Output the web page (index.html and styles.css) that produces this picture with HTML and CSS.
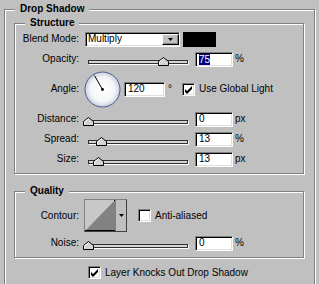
FILE: index.html
```html
<!DOCTYPE html>
<html>
<head>
<meta charset="utf-8">
<title>Drop Shadow</title>
<link rel="stylesheet" href="styles.css">
</head>
<body>
<div class="group outer">
  <div class="legend">Drop Shadow</div>

  <div class="group inner structure">
    <div class="legend">Structure</div>

    <div class="row">
      <div class="label">Blend Mode:</div>
      <div class="select">
        <span class="select-text">Multiply</span>
        <span class="drop-btn"><svg width="5" height="3" viewBox="0 0 5 3"><polygon points="0,0 5,0 2.5,3" fill="#000"/></svg></span>
      </div>
      <div class="swatch"></div>
    </div>

    <div class="row">
      <div class="label">Opacity:</div>
      <div class="slider">
        <div class="track"></div>
        <svg class="thumb" style="left:70px" width="11" height="9" viewBox="0 0 11 9"><polygon points="5.5,0.5 10.5,4.5 10.5,8.5 0.5,8.5 0.5,4.5" fill="#d4d4d4" stroke="#000"/><polyline points="1.5,7.5 1.5,5 5.5,1.8" fill="none" stroke="#fff"/></svg>
      </div>
      <div class="field"><span class="sel">75</span></div>
      <span class="unit">%</span>
    </div>

    <div class="row tall">
      <div class="label">Angle:</div>
      <svg class="dial" width="37" height="37" viewBox="0 0 37 37">
        <defs>
          <radialGradient id="dialg" cx="50%" cy="50%" r="50%">
            <stop offset="0" stop-color="#ffffff"/>
            <stop offset="0.7" stop-color="#f4f5f8"/>
            <stop offset="1" stop-color="#c9cedd"/>
          </radialGradient>
        </defs>
        <circle cx="18.5" cy="18.5" r="17.5" fill="url(#dialg)" stroke="#4d5f91"/>
        <line x1="18.5" y1="18.5" x2="10.5" y2="4.6" stroke="#000" stroke-width="1"/>
        <circle cx="18.5" cy="18.5" r="1.4" fill="#000"/>
      </svg>
      <div class="field wide">120</div>
      <span class="deg">°</span>
      <div class="check on gl"><svg width="11" height="11" viewBox="0 0 11 11"><path d="M2 5 L4 7 L9 2 L9 5 L4 10 L2 8 Z" fill="#000"/></svg></div>
      <span class="check-label">Use Global Light</span>
    </div>

    <div class="row">
      <div class="label">Distance:</div>
      <div class="slider">
        <div class="track"></div>
        <svg class="thumb" style="left:-5px" width="11" height="9" viewBox="0 0 11 9"><polygon points="5.5,0.5 10.5,4.5 10.5,8.5 0.5,8.5 0.5,4.5" fill="#d4d4d4" stroke="#000"/><polyline points="1.5,7.5 1.5,5 5.5,1.8" fill="none" stroke="#fff"/></svg>
      </div>
      <div class="field">0</div>
      <span class="unit">px</span>
    </div>

    <div class="row">
      <div class="label">Spread:</div>
      <div class="slider">
        <div class="track"></div>
        <svg class="thumb" style="left:8px" width="11" height="9" viewBox="0 0 11 9"><polygon points="5.5,0.5 10.5,4.5 10.5,8.5 0.5,8.5 0.5,4.5" fill="#d4d4d4" stroke="#000"/><polyline points="1.5,7.5 1.5,5 5.5,1.8" fill="none" stroke="#fff"/></svg>
      </div>
      <div class="field">13</div>
      <span class="unit">%</span>
    </div>

    <div class="row">
      <div class="label">Size:</div>
      <div class="slider">
        <div class="track"></div>
        <svg class="thumb" style="left:5px" width="11" height="9" viewBox="0 0 11 9"><polygon points="5.5,0.5 10.5,4.5 10.5,8.5 0.5,8.5 0.5,4.5" fill="#d4d4d4" stroke="#000"/><polyline points="1.5,7.5 1.5,5 5.5,1.8" fill="none" stroke="#fff"/></svg>
      </div>
      <div class="field">13</div>
      <span class="unit">px</span>
    </div>
  </div>

  <div class="group inner quality">
    <div class="legend">Quality</div>

    <div class="row contour-row">
      <div class="label">Contour:</div>
      <div class="contour">
        <svg class="contour-preview" width="30" height="31" viewBox="0 0 30 31">
          <rect x="0" y="0" width="30" height="31" fill="#c8c8c8"/>
          <polygon points="0,31 30,0 30,31" fill="#828282"/>
          <rect x="0" y="30" width="30" height="1" fill="#000"/>
          <rect x="29" y="0" width="1" height="1" fill="#000"/>
        </svg>
        <div class="contour-drop"><svg width="5" height="3" viewBox="0 0 5 3"><polygon points="0,0 5,0 2.5,3" fill="#000"/></svg></div>
      </div>
      <div class="check aa"></div>
      <span class="check-label">Anti-aliased</span>
    </div>

    <div class="row noise-row">
      <div class="label">Noise:</div>
      <div class="slider">
        <div class="track"></div>
        <svg class="thumb" style="left:-5px" width="11" height="9" viewBox="0 0 11 9"><polygon points="5.5,0.5 10.5,4.5 10.5,8.5 0.5,8.5 0.5,4.5" fill="#d4d4d4" stroke="#000"/><polyline points="1.5,7.5 1.5,5 5.5,1.8" fill="none" stroke="#fff"/></svg>
      </div>
      <div class="field">0</div>
      <span class="unit">%</span>
    </div>
  </div>

  <div class="knock">
    <div class="check on"><svg width="11" height="11" viewBox="0 0 11 11"><path d="M2 5 L4 7 L9 2 L9 5 L4 10 L2 8 Z" fill="#000"/></svg></div>
    <span class="check-label">Layer Knocks Out Drop Shadow</span>
  </div>
</div>
</body>
</html>
```

FILE: styles.css
```css
html, body {
  margin: 0;
  padding: 0;
  overflow: hidden;
}

body {
  width: 319px;
  height: 284px;
  background: #c0c0c0;
  color: #000;
  font-family: "Liberation Sans", Arial, sans-serif;
  font-size: 10px;
  line-height: 12px;
}

.group {
  box-sizing: border-box;
  border: 1px solid #808080;
  box-shadow: inset 1px 1px #fff, 1px 1px #fff;
}

.outer {
  margin: 9px 0 0 4px;
  width: 311px;
  padding-bottom: 24px;
}

.legend {
  width: fit-content;
  margin: -7px 0 0 10px;
  padding: 0 5px;
  height: 12px;
  background: #c0c0c0;
  font-weight: bold;
}

.inner {
  margin-left: 9px;
  width: 290px;
}

.structure {
  margin-top: 8px;
  padding-bottom: 4px;
}

.quality {
  margin-top: 17px;
  padding-bottom: 4px;
}

.row {
  display: flex;
  align-items: center;
  height: 20px;
}

.row.tall {
  height: 40px;
}

.contour-row {
  height: 33px;
  margin-top: 2px;
}

.noise-row {
  margin-top: 1px;
}

.label {
  flex: none;
  width: 64px;
  text-align: right;
}

/* sunken controls */
.select,
.field,
.check {
  box-sizing: border-box;
  border: 1px solid;
  border-color: #808080 #fff #fff #808080;
  box-shadow: inset 1px 1px #000, inset -1px -1px #dfdfdf;
  background: #fff;
  flex: none;
}

.select {
  display: flex;
  align-items: center;
  margin-left: 6px;
  width: 95px;
  height: 15px;
  padding-left: 2px;
}

.select-text {
  flex: 1;
}

.drop-btn {
  box-sizing: border-box;
  display: flex;
  align-items: center;
  justify-content: center;
  width: 17px;
  height: 11px;
  border: 1px solid;
  border-color: #fff #000 #000 #fff;
  box-shadow: inset -1px -1px #808080;
  background: #c0c0c0;
}

.drop-btn svg,
.contour-drop svg {
  display: block;
}

.swatch {
  flex: none;
  margin: 1px 0 0 3px;
  width: 33px;
  height: 15px;
  background: #000;
}

.slider {
  position: relative;
  flex: none;
  margin: 4px 0 0 9px;
  width: 100px;
  height: 9px;
}

.track {
  box-sizing: border-box;
  margin-top: 3px;
  height: 4px;
  border: 1px solid #303030;
  background: #d4d4d4;
  box-shadow: 1px 1px #fff;
}

.thumb {
  position: absolute;
  top: 0;
  display: block;
}

.field {
  margin-left: 7px;
  width: 38px;
  height: 15px;
  padding-left: 3px;
  line-height: 12px;
  display: flex;
  align-items: center;
}

.field.wide {
  margin-left: 3px;
  width: 41px;
}

.sel {
  background: #000080;
  color: #fff;
  line-height: 11px;
}

.unit {
  margin-left: 2px;
}

.deg {
  margin-left: 3px;
}

.dial {
  flex: none;
  display: block;
  margin-left: 5px;
}

.check {
  width: 13px;
  height: 13px;
}

.check svg {
  display: block;
}

.check.gl {
  margin-left: 10px;
}

.check.aa {
  margin-left: 11px;
}

.check-label {
  margin-left: 4px;
  white-space: nowrap;
}

.contour {
  box-sizing: border-box;
  flex: none;
  display: flex;
  margin-left: 5px;
  width: 43px;
  height: 33px;
  border: 1px solid #808080;
  border-right-color: #404040;
  border-bottom-color: #404040;
}

.contour-preview {
  display: block;
}

.contour-drop {
  flex: 1;
  display: flex;
  align-items: center;
  justify-content: center;
  border-left: 1px solid #808080;
  background: #c0c0c0;
}

.knock {
  display: flex;
  align-items: center;
  margin: 8px 0 0 83px;
  height: 13px;
}
```
